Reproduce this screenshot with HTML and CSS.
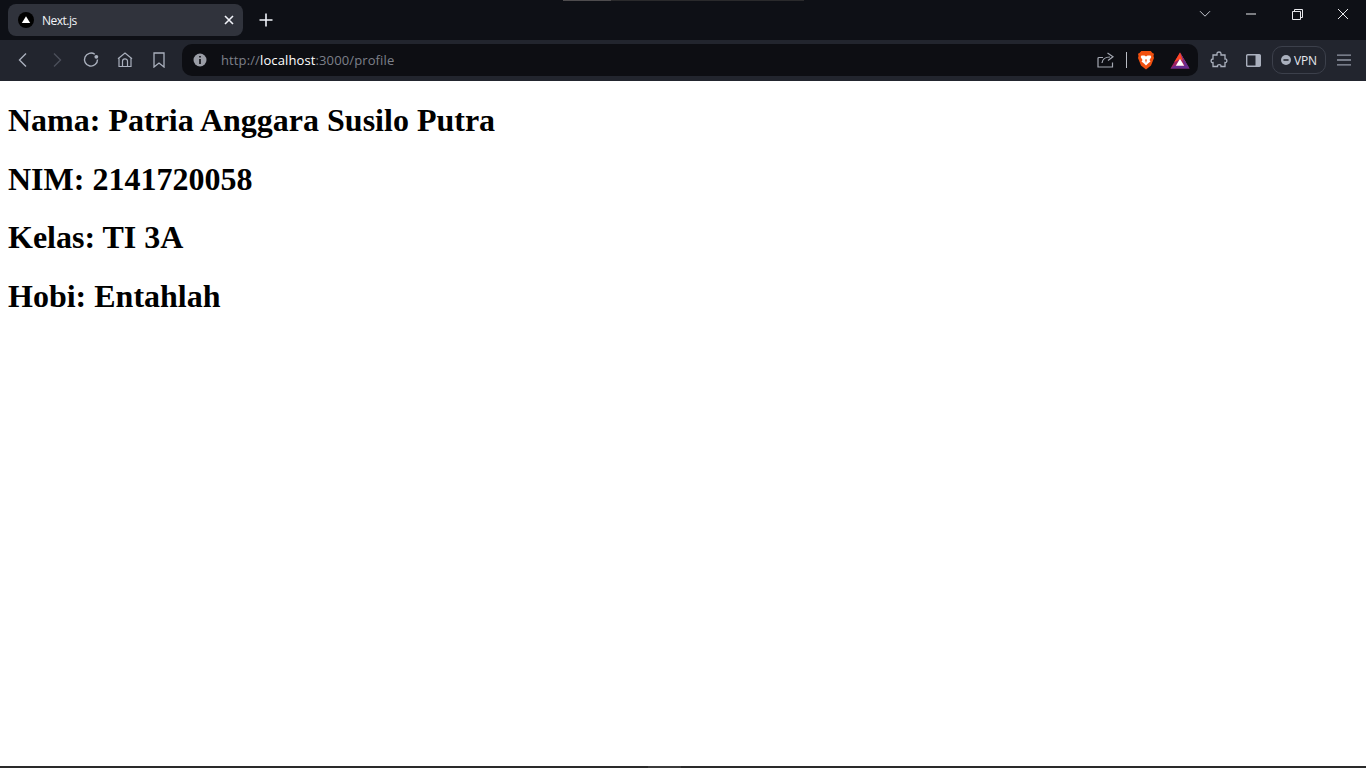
FILE: index.html
```html
<!DOCTYPE html>
<html lang="id">
<head>
<meta charset="utf-8">
<title>Next.js</title>
<link rel="stylesheet" href="styles.css">
</head>
<body>
<header class="browser">
  <div class="tabstrip">
    <div class="drag-mark"><span class="drag-thumb"></span></div>
    <div class="tab">
      <svg class="favicon" width="16" height="16" viewBox="0 0 16 16"><circle cx="8" cy="8" r="8" fill="#000"/><path d="M8 4.200 12.200 11H3.800Z" fill="#fff"/></svg>
      <span class="tab-title">Next.js</span>
      <svg class="tab-close" width="10" height="10" viewBox="0 0 10 10"><path d="M1 1 9 9M9 1 1 9" stroke="#f1f3f9" stroke-width="1.600" fill="none"/></svg>
    </div>
    <button class="newtab" aria-label="New tab"><svg width="14" height="14" viewBox="0 0 14 14"><path d="M7 .5V13.500M.5 7H13.500" stroke="#f1f3f9" stroke-width="1.600" fill="none"/></svg></button>
    <div class="spacer"></div>
    <div class="winctl"><svg width="12" height="8" viewBox="0 0 12 8"><path d="M1 1.200 6 6.200 11 1.200" stroke="#c4c7cf" fill="none"/></svg></div>
    <div class="winctl"><svg width="10" height="2" viewBox="0 0 10 2"><path d="M0 1H10" stroke="#e8e9ec" fill="none"/></svg></div>
    <div class="winctl"><svg width="11" height="11" viewBox="0 0 11 11"><path d="M.5 2.500H8.500V10.500H.5ZM2.500 2.500V.5H10.500V8.500H8.500" stroke="#e8e9ec" fill="none"/></svg></div>
    <div class="winctl"><svg width="12" height="12" viewBox="0 0 12 12"><path d="M1 1 11 11M11 1 1 11" stroke="#e8e9ec" fill="none"/></svg></div>
  </div>
  <div class="toolbar">
    <div class="tool"><svg width="16" height="16" viewBox="0 0 16 16"><path d="M11 1.500 4.500 8 11 14.500" stroke="#aab0bd" stroke-width="1.400" fill="none"/></svg></div>
    <div class="tool"><svg width="16" height="16" viewBox="0 0 16 16"><path d="M5 1.500 11.500 8 5 14.500" stroke="#4b4f5a" stroke-width="1.400" fill="none"/></svg></div>
    <div class="tool"><svg width="18" height="18" viewBox="0 0 18 18"><path d="M15.500 8.500A6.500 6.500 0 1 1 12.800 3.300" stroke="#aab0bd" stroke-width="1.400" fill="none"/><circle cx="14.300" cy="5.800" r="1.900" fill="#aab0bd"/></svg></div>
    <div class="tool"><svg width="16" height="16" viewBox="0 0 16 16"><path d="M1 6.800 8 1l7 5.800M2 6v8.500h12V6M5.500 14.500V9.300a2.500 2.500 0 0 1 5 0v5.200" stroke="#aab0bd" stroke-width="1.200" fill="none"/></svg></div>
    <div class="tool"><svg width="14" height="16" viewBox="0 0 14 16"><path d="M2 1H12V15L7 11 2 15Z" stroke="#aab0bd" stroke-width="1.300" fill="none"/></svg></div>
    <div class="omnibox">
      <svg class="info" width="14" height="14" viewBox="0 0 14 14"><circle cx="7" cy="7" r="6.500" fill="#9a9da6"/><path d="M6.200 3h1.600v1.600H6.200ZM6.200 6h1.600v5H6.200Z" fill="#0d0e13"/></svg>
      <div class="url"><span class="url-dim">http://</span><span class="url-host">localhost</span><span class="url-dim">:3000/profile</span></div>
      <svg class="share" width="18" height="16" viewBox="0 0 18 16"><path d="M6 5.500H2a1 1 0 0 0-1 1V15H15.500V10.500" stroke="#a4a8b2" stroke-width="1.200" fill="none"/><path d="M5 11C5.500 7 8.500 5 13 5M10.500 1 16 4.800 11 8.600" stroke="#a4a8b2" stroke-width="1.200" fill="none"/></svg>
      <span class="divider"></span>
      <svg class="brave" width="18" height="20" viewBox="0 0 17 20"><path d="M3.800 1H13.200L15 3 16.500 3.800 16 6 16.500 8 13.500 15.500 8.500 19.500 3.500 15.500 .5 8 1 6 .5 3.800 2 3Z" fill="#f1500f"/><path d="M4 5.500H7L8.500 6.500 10 5.500H13L13.800 7 12 10 13 11.500 10.500 13.500 8.500 15.500 6.500 13.500 4 11.500 5 10 3.200 7Z" fill="#fff"/><path d="M7.500 9.500h2L8.500 13Z" fill="#f1500f"/></svg>
      <svg class="bat" width="20" height="17" viewBox="0 0 20 17"><path d="M10 .5 19.500 16.500H.5Z" fill="#9e1f63"/><path d="M10 .5 15.800 10.300 10 7 4.200 10.300Z" fill="#ff4724"/><path d="M10 .5 19.500 16.500 15 14Z" fill="#662d91"/><path d="M.5 16.500H19.500L15.500 13.800H4.500Z" fill="#662d91"/><path d="M10 6.700 14.200 13.800H5.800Z" fill="#fff"/></svg>
    </div>
    <div class="tool"><svg width="18" height="18" viewBox="0 0 18 18"><path d="M7 2.500C7 .5 11 .5 11 2.500V4H15V8C17.500 7.500 17.500 12 15 11.500V15.500H11C11.500 13 7 13 7.500 15.500L3 15.500V11.500C.5 12 .5 8 3 8V4H7Z" stroke="#aab0bd" stroke-width="1.300" fill="none"/></svg></div>
    <div class="tool"><svg width="15" height="13" viewBox="0 0 15 13"><rect x=".7" y=".7" width="13.600" height="11.600" rx="1" stroke="#aab0bd" stroke-width="1.400" fill="none"/><rect x="9.500" y="1" width="5" height="11" fill="#aab0bd"/></svg></div>
    <div class="vpn">
      <svg width="10" height="10" viewBox="0 0 9 9"><circle cx="4.500" cy="4.500" r="4.500" fill="#aab0bd"/><path d="M2.200 3.800h4.600v1.400H2.200Z" fill="#22252e"/></svg>
      <span class="vpn-label">VPN</span>
    </div>
    <div class="tool"><svg width="14" height="12" viewBox="0 0 14 12"><path d="M0 1.200H14M0 6H14M0 10.800H14" stroke="#9298a5" stroke-width="1.300" fill="none"/></svg></div>
  </div>
</header>
<main class="page">
  <h1 class="line">Nama: Patria Anggara Susilo Putra</h1>
  <h1 class="line">NIM: 2141720058</h1>
  <h1 class="line">Kelas: TI 3A</h1>
  <h1 class="line">Hobi: Entahlah</h1>
</main>
<div class="taskbar-edge"><span class="taskbar-thumb"></span></div>
</body>
</html>
```
FILE: styles.css
```css
* { box-sizing: border-box; }
html, body { margin: 0; height: 100%; }
body {
  display: flex;
  flex-direction: column;
  height: 768px;
  overflow: hidden;
  background: #fff;
  font-family: "Open Sans", "Noto Sans", sans-serif;
}
.browser { flex: none; }
.tabstrip {
  position: relative;
  display: flex;
  align-items: flex-start;
  height: 40px;
  padding: 4px 0 0 8px;
  background: #0e1016;
}
.drag-mark {
  position: absolute;
  top: 0;
  left: 563px;
  width: 241px;
  height: 1px;
  background: #2a2a2c;
}
.drag-thumb {
  display: block;
  width: 48px;
  height: 1px;
  background: #4e4c4e;
}
.tab {
  display: flex;
  align-items: center;
  width: 235px;
  height: 32px;
  padding: 0 9px 0 10px;
  border-radius: 8px;
  background: #30333c;
}
.favicon { flex: none; }
.tab-title {
  flex: 1;
  margin-left: 8px;
  color: #f1f3f9;
  font-size: 12px;
  letter-spacing: -0.5px;
}
.tab-close { flex: none; }
.newtab {
  display: flex;
  align-items: center;
  justify-content: center;
  width: 32px;
  height: 32px;
  margin-left: 7px;
  padding: 0;
  border: 0;
  background: none;
}
.spacer { flex: 1; }
.winctl {
  display: flex;
  align-items: center;
  justify-content: center;
  width: 46px;
  height: 20px;
}
.toolbar {
  display: flex;
  align-items: center;
  height: 41px;
  padding: 0 5px 1px 6px;
  background: #22252e;
}
.tool {
  display: flex;
  flex: none;
  align-items: center;
  justify-content: center;
  width: 34px;
  height: 34px;
}
.omnibox {
  display: flex;
  flex: 1;
  align-items: center;
  height: 32px;
  margin: 0 4px 0 6px;
  padding: 0 8px 0 11px;
  border-radius: 10px;
  background: #0d0e13;
}
.info { flex: none; }
.url {
  flex: 1;
  margin-left: 14px;
  font-size: 13px;
  letter-spacing: 0.12px;
  white-space: nowrap;
}
.url-dim { color: #7d808a; }
.url-host { color: #fff; }
.share { flex: none; }
.divider {
  flex: none;
  width: 1px;
  height: 16px;
  margin: 0 10px 0 11px;
  background: #b9bcc4;
}
.brave { flex: none; }
.bat { flex: none; margin-left: 15px; }
.vpn {
  display: flex;
  flex: none;
  align-items: center;
  justify-content: center;
  gap: 3px;
  width: 54px;
  height: 28px;
  margin: 0 1px 0 2px;
  border: 1px solid #3c404b;
  border-radius: 10px;
}
.vpn-label {
  color: #e6e8ee;
  font-size: 12px;
  font-weight: 500;
  letter-spacing: -0.2px;
}
.page {
  flex: 1;
  padding: 0 8px;
  overflow: hidden;
}
.line {
  margin: 21.44px 0;
  color: #000;
  font-family: "Liberation Serif", serif;
  font-size: 32px;
  font-weight: 700;
}
.taskbar-edge {
  flex: none;
  height: 2px;
  background: #2a2a2a;
}
.taskbar-thumb {
  display: block;
  width: 33px;
  height: 2px;
  margin-left: 648px;
  background: #3b3b3b;
}
```
